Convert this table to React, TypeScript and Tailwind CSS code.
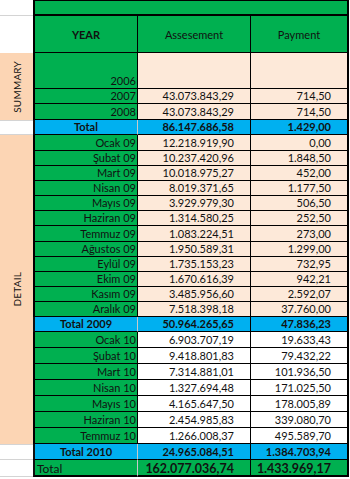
const GREEN = 'bg-[#00b050]';
const BLUE = 'bg-[#00b0f0]';

type Row = { label: string; a: string; p: string; h: string };

const rows09: Row[] = [
  { label: 'Ocak 09', a: '12.218.919,90', p: '0,00', h: 'h-[16px]' },
  { label: 'Şubat 09', a: '10.237.420,96', p: '1.848,50', h: 'h-[15px]' },
  { label: 'Mart 09', a: '10.018.975,27', p: '452,00', h: 'h-[15px]' },
  { label: 'Nisan 09', a: '8.019.371,65', p: '1.177,50', h: 'h-[15px]' },
  { label: 'Mayıs 09', a: '3.929.979,30', p: '506,50', h: 'h-[15px]' },
  { label: 'Haziran 09', a: '1.314.580,25', p: '252,50', h: 'h-[15px]' },
  { label: 'Temmuz 09', a: '1.083.224,51', p: '273,00', h: 'h-[16px]' },
  { label: 'Ağustos 09', a: '1.950.589,31', p: '1.299,00', h: 'h-[15px]' },
  { label: 'Eylül 09', a: '1.735.153,23', p: '732,95', h: 'h-[15px]' },
  { label: 'Ekim 09', a: '1.670.616,39', p: '942,21', h: 'h-[15px]' },
  { label: 'Kasım 09', a: '3.485.956,60', p: '2.592,07', h: 'h-[15px]' },
  { label: 'Aralık 09', a: '7.518.398,18', p: '37.760,00', h: 'h-[15px]' },
];

const rows10: Row[] = [
  { label: 'Ocak 10', a: '6.903.707,19', p: '19.633,43', h: 'h-[16px]' },
  { label: 'Şubat 10', a: '9.418.801,83', p: '79.432,22', h: 'h-[16px]' },
  { label: 'Mart 10', a: '7.314.881,01', p: '101.936,50', h: 'h-[16px]' },
  { label: 'Nisan 10', a: '1.327.694,48', p: '171.025,50', h: 'h-[16px]' },
  { label: 'Mayıs 10', a: '4.165.647,50', p: '178.005,89', h: 'h-[16px]' },
  { label: 'Haziran 10', a: '2.454.985,83', p: '339.080,70', h: 'h-[16px]' },
  { label: 'Temmuz 10', a: '1.266.008,37', p: '495.589,70', h: 'h-[16px]' },
];

// one normal line: green year cell + two value cells
const DataRow = ({ label, a, p, h, bg }: Row & { bg: string }) => (
  <>
    <div className={`${h} ${GREEN} border-l-2 border-r border-b border-black flex items-end justify-end pr-px pb-px`}>{label}</div>
    <div className={`${h} ${bg} border-r border-b border-black flex items-end justify-end pr-4 pb-px`}>{a}</div>
    <div className={`${h} ${bg} border-r-2 border-b border-black flex items-end justify-end pr-4 pb-px`}>{p}</div>
  </>
);

const TotalRow = ({ label, a, p, h }: { label: string; a: string; p: string; h: string }) => (
  <>
    <div className={`${h} ${BLUE} border-l-2 border-r border-r-[#c9c9c9] border-b border-b-black flex items-end justify-center pb-px font-bold`}>{label}</div>
    <div className={`${h} ${BLUE} border-r border-b border-black flex items-end justify-end pr-4 pb-px font-bold`}>{a}</div>
    <div className={`${h} ${BLUE} border-r-2 border-b border-black flex items-end justify-end pr-4 pb-px font-bold`}>{p}</div>
  </>
);

const Side = ({ className = '' }: { className?: string }) => (
  <div className={`bg-white border-b border-[#d4d4d4] ${className}`} />
);

export default function App() {
  return (
    <div className="w-[350px] h-[479px] bg-white overflow-hidden text-[11px] leading-[12px] text-[#111] font-['Lato','Liberation_Sans',sans-serif]">
      <div className="grid grid-cols-[33px_105px_113px_98px]">
        {/* top bar */}
        <Side className="h-[16px]" />
        <div className={`col-span-3 h-[16px] ${GREEN} border-t border-b-2 border-x-2 border-black`} />

        {/* header */}
        <div className="h-[37px] bg-white" />
        <div className={`h-[37px] ${GREEN} border-l-2 border-r border-b border-black flex items-center justify-center pt-[2px] font-bold`}>YEAR</div>
        <div className={`h-[37px] ${GREEN} border-r border-b border-black flex items-center justify-center pt-[2px]`}>Assesement</div>
        <div className={`h-[37px] ${GREEN} border-r-2 border-b border-black flex items-center justify-center pt-[2px]`}>Payment</div>

        {/* summary */}
        <div className="row-span-3 bg-[#fcd5b4] flex items-center justify-center">
          <span className="[writing-mode:vertical-rl] rotate-180 text-[10px] tracking-[0.2px]">SUMMARY</span>
        </div>
        <DataRow label="2006" a="" p="" h="h-[36px]" bg="bg-[#fde9d9]" />
        <DataRow label="2007" a="43.073.843,29" p="714,50" h="h-[15px]" bg="bg-[#fde9d9]" />
        <DataRow label="2008" a="43.073.843,29" p="714,50" h="h-[16px]" bg="bg-[#fde9d9]" />

        <Side className="h-[15px] border-t" />
        <TotalRow label="Total" a="86.147.686,58" p="1.429,00" h="h-[15px]" />

        {/* detail */}
        <div className="row-span-20 bg-[#fcd5b4] flex items-center justify-center">
          <span className="[writing-mode:vertical-rl] rotate-180 text-[10px] tracking-[0.2px]">DETAIL</span>
        </div>
        {rows09.map((r) => (
          <DataRow key={r.label} {...r} bg="bg-[#fde9d9]" />
        ))}
        <TotalRow label="Total 2009" a="50.964.265,65" p="47.836,23" h="h-[15px]" />
        {rows10.map((r) => (
          <DataRow key={r.label} {...r} bg="bg-white" />
        ))}

        <Side className="h-[16px] border-t" />
        <TotalRow label="Total 2010" a="24.965.084,51" p="1.384.703,94" h="h-[16px]" />

        {/* grand total */}
        <Side className="h-[17px]" />
        <div className={`h-[17px] ${GREEN} border-l-2 border-r border-r-[#c9c9c9] border-b-2 border-b-black flex items-end pl-[2px] text-[12px]`}>Total</div>
        <div className={`h-[17px] ${GREEN} border-r border-b-2 border-black flex items-end justify-end pr-4 font-bold text-[12.5px]`}>162.077.036,74</div>
        <div className={`h-[17px] ${GREEN} border-r-2 border-b-2 border-black flex items-end justify-end pr-4 font-bold text-[12.5px]`}>1.433.969,17</div>
      </div>
    </div>
  );
}
